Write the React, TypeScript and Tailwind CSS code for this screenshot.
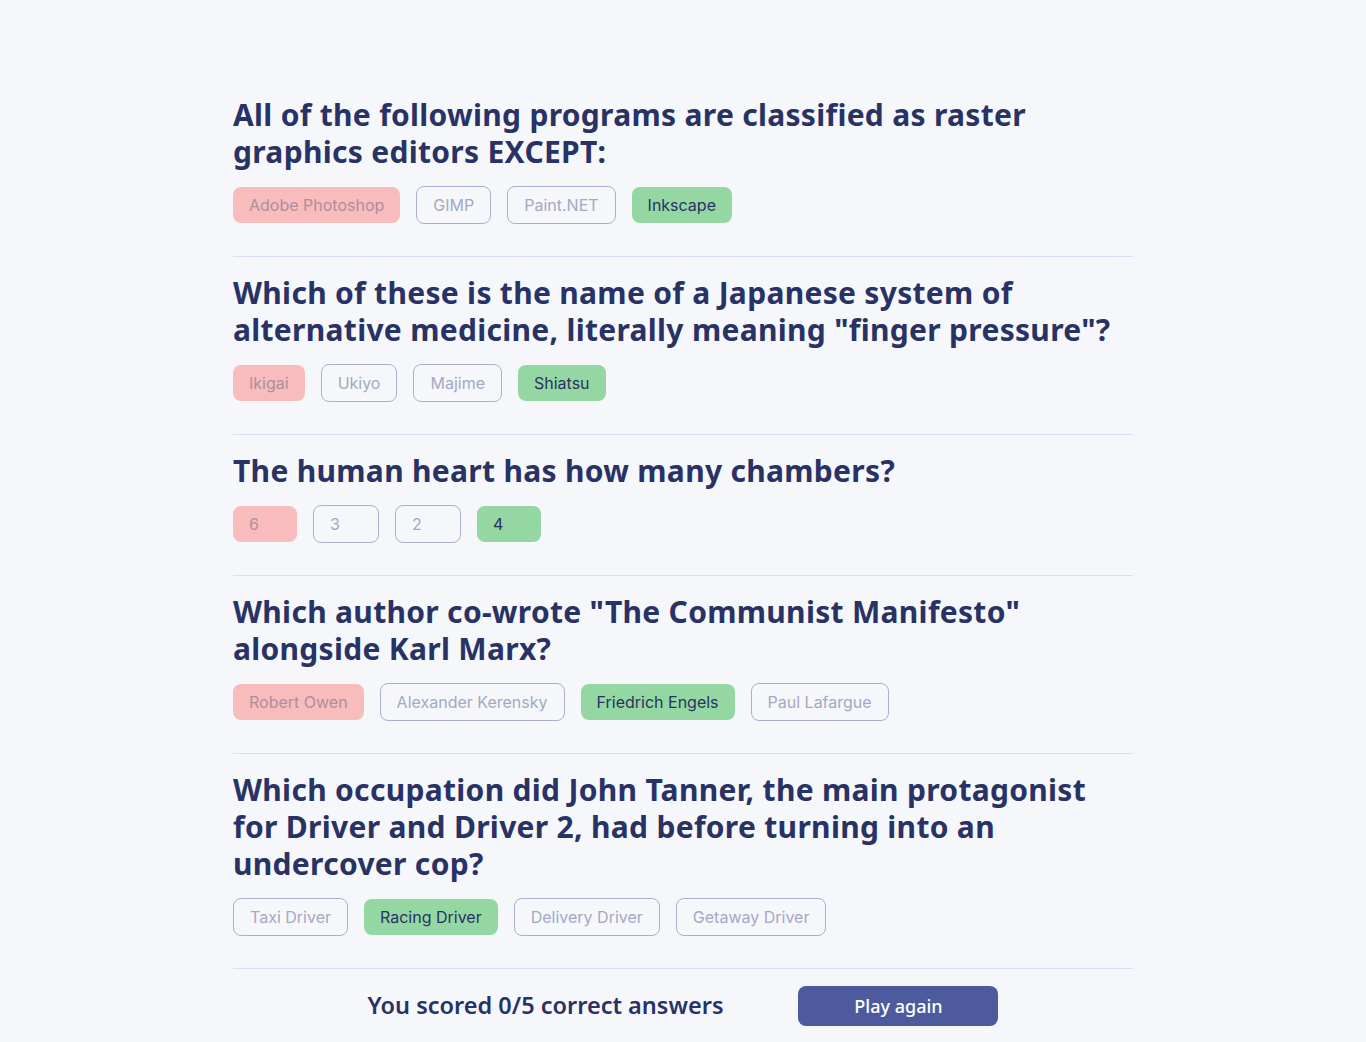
import React from 'react';

type Question = {
  question: string;
  answers: { text: string; state: 'wrong' | 'correct' | 'idle' }[];
};

const QUESTIONS: Question[] = [
  {
    question: 'All of the following programs are classified as raster graphics editors EXCEPT:',
    answers: [
      { text: 'Adobe Photoshop', state: 'wrong' },
      { text: 'GIMP', state: 'idle' },
      { text: 'Paint.NET', state: 'idle' },
      { text: 'Inkscape', state: 'correct' },
    ],
  },
  {
    question: 'Which of these is the name of a Japanese system of alternative medicine, literally meaning "finger pressure"?',
    answers: [
      { text: 'Ikigai', state: 'wrong' },
      { text: 'Ukiyo', state: 'idle' },
      { text: 'Majime', state: 'idle' },
      { text: 'Shiatsu', state: 'correct' },
    ],
  },
  {
    question: 'The human heart has how many chambers?',
    answers: [
      { text: '6', state: 'wrong' },
      { text: '3', state: 'idle' },
      { text: '2', state: 'idle' },
      { text: '4', state: 'correct' },
    ],
  },
  {
    question: 'Which author co-wrote "The Communist Manifesto" alongside Karl Marx?',
    answers: [
      { text: 'Robert Owen', state: 'wrong' },
      { text: 'Alexander Kerensky', state: 'idle' },
      { text: 'Friedrich Engels', state: 'correct' },
      { text: 'Paul Lafargue', state: 'idle' },
    ],
  },
  {
    question:
      'Which occupation did John Tanner, the main protagonist for Driver and Driver 2, had before turning into an undercover cop?',
    answers: [
      { text: 'Taxi Driver', state: 'idle' },
      { text: 'Racing Driver', state: 'correct' },
      { text: 'Delivery Driver', state: 'idle' },
      { text: 'Getaway Driver', state: 'idle' },
    ],
  },
];

// selected/correct answers have no border, the rest get a 1px outline outside the 36px box
const answerClass = {
  wrong: 'h-9 min-w-16 bg-[#f8bcbc] text-[#ad8f9f]',
  correct: 'h-9 min-w-16 bg-[#94d7a2] text-[#293264]',
  idle: 'h-[38px] min-w-[66px] border border-[#aab0cf] text-[#a4a8c4]',
};

const App: React.FC = () => {
  return (
    <div className="min-h-screen bg-[#f5f7fb] font-['Inter',sans-serif]">
      <div className="w-[900px] mx-auto pt-[79px]">
        {QUESTIONS.map((q, i) => (
          <div key={i} className="pt-[17px] pb-[33px] border-b border-[#dbdef0]">
            <h2 className="font-['Noto_Sans',sans-serif] font-bold text-[30px] leading-[37px] text-[#293264] tracking-[0.01em]">
              {q.question}
            </h2>
            <div className="mt-[17px] flex items-center gap-4 h-9">
              {q.answers.map(a => (
                <button
                  key={a.text}
                  className={`px-4 rounded-lg text-left text-base ${answerClass[a.state]}`}
                >
                  {a.text}
                </button>
              ))}
            </div>
          </div>
        ))}
        <div className="pt-[17px] pb-4 flex items-center justify-center gap-[75px]">
          <p className="font-['Noto_Sans',sans-serif] font-semibold text-[23.5px] text-[#293264]">
            You scored 0/5 correct answers
          </p>
          <button className="w-[200px] h-10 rounded-lg bg-[#4d5b9e] text-white text-[18px] font-['Noto_Sans',sans-serif] font-medium">
            Play again
          </button>
        </div>
      </div>
    </div>
  );
};

export default App;
